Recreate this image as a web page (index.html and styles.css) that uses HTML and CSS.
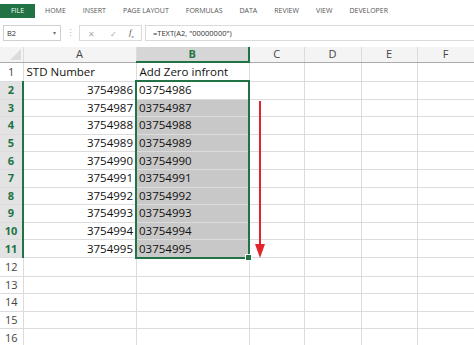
FILE: index.html
```html
<!DOCTYPE html>
<html lang="en">
<head>
    <meta charset="UTF-8">
    <title>Add Zero infront</title>
    <link rel="stylesheet" href="styles.css">
</head>
<body>

<!-- Ribbon tabs (collapsed) -->
<div class="ribbon">
    <div class="file-tab">FILE</div>
    <div class="tab first">HOME</div>
    <div class="tab">INSERT</div>
    <div class="tab">PAGE LAYOUT</div>
    <div class="tab">FORMULAS</div>
    <div class="tab">DATA</div>
    <div class="tab">REVIEW</div>
    <div class="tab">VIEW</div>
    <div class="tab">DEVELOPER</div>
</div>

<!-- Name box + formula bar -->
<div class="formula-row">
    <div class="name-box"><span>B2</span><span class="drop">&#9662;</span></div>
    <div class="dots">&#8942;</div>
    <div class="fx-box">
        <span class="fx-btn">&#10005;</span>
        <span class="fx-btn">&#10003;</span>
        <span class="fx-label">f<sub>x</sub></span>
    </div>
    <div class="formula">=TEXT(A2, "00000000")</div>
</div>

<!-- Sheet -->
<div class="sheet">
    <table class="grid">
        <colgroup>
            <col style="width:23px">
            <col style="width:113px">
            <col style="width:113px">
            <col style="width:55px">
            <col style="width:57px">
            <col style="width:56px">
            <col style="width:57px">
        </colgroup>
        <tr class="head">
            <th class="corner"><span class="tri"></span></th>
            <th>A</th><th class="on">B</th><th>C</th><th>D</th><th>E</th><th>F</th>
        </tr>
        <tr class="r1">
            <th>1</th><td class="txt">STD Number</td><td class="txt">Add Zero infront</td><td></td><td></td><td></td><td></td>
        </tr>
        <tr>
            <th class="on">2</th><td class="num">3754986</td><td class="sel top active">03754986</td><td></td><td></td><td></td><td></td>
        </tr>
        <tr>
            <th class="on">3</th><td class="num">3754987</td><td class="sel">03754987</td><td></td><td></td><td></td><td></td>
        </tr>
        <tr>
            <th class="on">4</th><td class="num">3754988</td><td class="sel">03754988</td><td></td><td></td><td></td><td></td>
        </tr>
        <tr>
            <th class="on">5</th><td class="num">3754989</td><td class="sel">03754989</td><td></td><td></td><td></td><td></td>
        </tr>
        <tr>
            <th class="on">6</th><td class="num">3754990</td><td class="sel">03754990</td><td></td><td></td><td></td><td></td>
        </tr>
        <tr>
            <th class="on">7</th><td class="num">3754991</td><td class="sel">03754991</td><td></td><td></td><td></td><td></td>
        </tr>
        <tr>
            <th class="on">8</th><td class="num">3754992</td><td class="sel">03754992</td><td></td><td></td><td></td><td></td>
        </tr>
        <tr>
            <th class="on">9</th><td class="num">3754993</td><td class="sel">03754993</td><td></td><td></td><td></td><td></td>
        </tr>
        <tr>
            <th class="on">10</th><td class="num">3754994</td><td class="sel">03754994</td><td></td><td></td><td></td><td></td>
        </tr>
        <tr>
            <th class="on">11</th><td class="num">3754995</td><td class="sel bottom">03754995<span class="handle"></span></td><td></td><td></td><td></td><td></td>
        </tr>
        <tr><th>12</th><td></td><td></td><td></td><td></td><td></td><td></td></tr>
        <tr><th>13</th><td></td><td></td><td></td><td></td><td></td><td></td></tr>
        <tr><th>14</th><td></td><td></td><td></td><td></td><td></td><td></td></tr>
        <tr><th>15</th><td></td><td></td><td></td><td></td><td></td><td></td></tr>
        <tr><th>16</th><td></td><td></td><td></td><td></td><td></td><td></td></tr>
    </table>

    <!-- red fill-down arrow drawn over the grid -->
    <svg class="arrow" width="14" height="162" viewBox="0 0 14 162">
        <line x1="7" y1="0" x2="7" y2="148" stroke="#e3252b" stroke-width="2"/>
        <polygon points="2,143 12,143 7,157" fill="#e3252b"/>
    </svg>
</div>

</body>
</html>
```

FILE: styles.css
```css
body {
    margin: 0;
    background-color: #fff;
    font-family: "Open Sans", Arial, sans-serif;
    color: #222;
    overflow: hidden;
}

/* ribbon */
.ribbon {
    display: flex;
    align-items: center;
    height: 20px;
    font-size: 7px;
    color: #555;
}
.file-tab {
    width: 35px;
    height: 14px;
    margin-top: 1px;
    background-color: #217346;
    color: #fff;
    display: flex;
    align-items: center;
    justify-content: center;
}
.tab {
    margin-left: 17px;
}
.tab.first {
    margin-left: 10px;
}

/* formula bar */
.formula-row {
    display: flex;
    align-items: stretch;
    height: 16px;
    margin-top: 5px;
    font-size: 7.5px;
    color: #333;
}
.name-box {
    width: 58px;
    margin-left: 3px;
    border: 1px solid #d0d0d0;
    display: flex;
    align-items: center;
    justify-content: space-between;
    padding: 0 4px 0 3px;
    box-sizing: border-box;
}
.name-box .drop {
    color: #777;
    font-size: 6px;
}
.dots {
    width: 18px;
    text-align: center;
    color: #b0b0b0;
    font-size: 9px;
    line-height: 16px;
}
.fx-box {
    width: 63px;
    border: 1px solid #dadada;
    display: flex;
    align-items: center;
    box-sizing: border-box;
    color: #aaa;
}
.fx-btn {
    margin-left: 8px;
    width: 14px;
    font-size: 8px;
}
.fx-label {
    margin-left: 5px;
    color: #555;
    font-family: "Liberation Serif", serif;
    font-style: italic;
    font-size: 9px;
}
.fx-label sub {
    font-size: 5px;
}
.formula {
    flex: 1;
    margin-left: 3px;
    border: 1px solid #dadada;
    border-right: none;
    padding-left: 7px;
    display: flex;
    align-items: center;
}

/* sheet grid */
.sheet {
    position: relative;
    margin-top: 6px;
}
.grid {
    border-collapse: collapse;
    table-layout: fixed;
    width: 474px;
    font-size: 11.5px;
    color: #111;
}
.grid td, .grid th {
    height: 16.6px;
    padding: 0;
    border: 1px solid #dcdcdc;
    white-space: nowrap;
    overflow: visible;
    line-height: 14px;
}
.grid tr:first-child th {
    border-top: none;
}
.grid th {
    font-weight: normal;
    color: #444;
    font-size: 11px;
    background-color: #fff;
}
.grid tr > :first-child {
    border-left: none;
}
.grid .head th {
    height: 14px;
    border-bottom: 1px solid #ababab;
    background-color: #f4f4f4;
}
.grid .head th.on {
    background-color: #d6d6d6;
    color: #217346;
    font-weight: bold;
    border-bottom: 2px solid #217346;
}
.grid .r1 td, .grid .r1 th {
    height: 17px;
}
.grid th.on {
    background-color: #e3e3e3;
    color: #217346;
    font-weight: bold;
    border-right: 2px solid #217346;
}
.corner {
    position: relative;
}
.tri {
    position: absolute;
    right: 2px;
    bottom: 2px;
    width: 0;
    height: 0;
    border-left: 11px solid transparent;
    border-bottom: 11px solid #dcdcdc;
}
.txt {
    padding-left: 3px !important;
}
.num {
    text-align: right;
    padding-right: 2px !important;
}
.sel {
    background-color: #c8c8c8;
    border-left: 2px solid #217346 !important;
    border-right: 2px solid #217346 !important;
    padding-left: 2px !important;
}
.sel.active {
    background-color: #fff;
}
.sel.top {
    border-top: 2px solid #217346 !important;
}
.sel.bottom {
    border-bottom: 2px solid #217346 !important;
    position: relative;
}
.handle {
    position: absolute;
    right: -4px;
    bottom: -4px;
    width: 5px;
    height: 5px;
    background-color: #217346;
    border: 1px solid #fff;
}
.arrow {
    position: absolute;
    left: 253px;
    top: 54px;
}
```
